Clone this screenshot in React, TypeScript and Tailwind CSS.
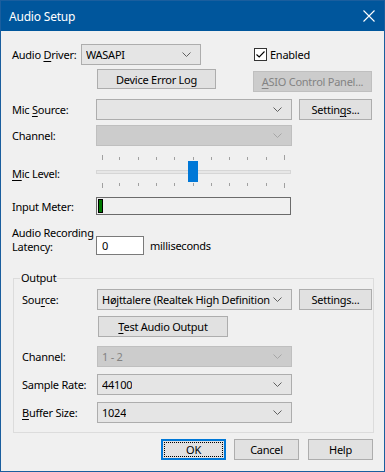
import React from 'react';

const font = { fontFamily: '"Noto Sans", "Liberation Sans", sans-serif' };

function Chevron({ disabled }: { disabled?: boolean }) {
  return (
    <svg width="9" height="5" viewBox="0 0 9 5" className="shrink-0">
      <path d="M0.5 0.5 L4.5 4.5 L8.5 0.5" fill="none" stroke={disabled ? '#a6a6a6' : '#606060'} strokeWidth="1" />
    </svg>
  );
}

function Combo({ value, width, disabled }: { value?: string; width: string; disabled?: boolean }) {
  return (
    <div
      className={`${width} h-[21px] shrink-0 flex items-center justify-between pl-[4px] pr-[9px] gap-[3px] border ${
        disabled ? 'bg-[#cccccc] border-[#bfbfbf] text-[#838383]' : 'bg-[#e5e5e5] border-[#adadad] text-black'
      }`}
    >
      <span className="overflow-hidden whitespace-nowrap">{value}</span>
      <Chevron disabled={disabled} />
    </div>
  );
}

function Button({ children, width, disabled, focused, className = '' }: { children: React.ReactNode; width: string; disabled?: boolean; focused?: boolean; className?: string }) {
  return (
    <div
      className={`${width} h-[21px] shrink-0 flex items-center justify-center whitespace-nowrap ${
        disabled
          ? 'bg-[#cccccc] border border-[#bfbfbf] text-[#838383]'
          : focused
          ? 'bg-[#e1e1e1] border-2 border-[#0078d7] text-black outline outline-1 outline-dotted outline-black outline-offset-[-4px]'
          : 'bg-[#e1e1e1] border border-[#adadad] text-black'
      } ${className}`}
    >
      {children}
    </div>
  );
}

function Acc({ children }: { children: React.ReactNode }) {
  return <span className="underline underline-offset-[2px] decoration-1">{children}</span>;
}

function Slider() {
  const ticks = [6, 23, 42, 60, 78, 97, 115, 133, 151, 170, 188];
  return (
    <svg width="196" height="34" viewBox="0 0 196 34">
      {ticks.map((x, i) => {
        const edge = i === 0 || i === ticks.length - 1;
        return (
          <g key={x} stroke="#a0a0a0" strokeWidth="1">
            <line x1={x + 0.5} y1={edge ? 0 : 2} x2={x + 0.5} y2={5} />
            <line x1={x + 0.5} y1={28} x2={x + 0.5} y2={edge ? 33 : 31} />
          </g>
        );
      })}
      <rect x="0.5" y="15.5" width="194" height="3" fill="#e7e7e7" stroke="#d6d6d6" />
      <rect x="92" y="6" width="10" height="21" fill="#0078d7" />
    </svg>
  );
}

export default function App() {
  return (
    <div style={font} className="w-[385px] h-[472px] flex flex-col bg-[#f0f0f0] border border-[#1a5e9e] text-[11px] tracking-[-0.25px] leading-[15px] text-black overflow-hidden">
      {/* title bar */}
      <div className="h-[30px] shrink-0 bg-[#00569c] flex items-center justify-between pl-[8px] pr-[9px] text-white">
        <span className="text-[12px] tracking-[-0.2px]">Audio Setup</span>
        <svg width="12" height="12" viewBox="0 0 12 12">
          <path d="M0.5 0.5 L11.5 11.5 M11.5 0.5 L0.5 11.5" stroke="white" strokeWidth="1.1" fill="none" />
        </svg>
      </div>

      <div className="flex flex-col pl-[11px] pr-[11px]">
        {/* Audio driver row */}
        <div className="mt-[13px] flex items-center h-[21px] whitespace-nowrap">
          <span className="w-[69px] shrink-0">Audio <Acc>D</Acc>river:</span>
          <Combo value="WASAPI" width="w-[120px]" />
          <div className="ml-[53px] flex items-center gap-[3px]">
            <div className="w-[13px] h-[13px] bg-white border border-[#333333] flex items-center justify-center">
              <svg width="9" height="7" viewBox="0 0 9 7">
                <path d="M0.5 3.5 L3.2 6 L8.5 0.5" fill="none" stroke="#000" strokeWidth="1.1" />
              </svg>
            </div>
            <span>Enabled</span>
          </div>
        </div>

        {/* Device error log / ASIO */}
        <div className="mt-[4px] flex items-start">
          <Button width="w-[119px]" className="ml-[85px] !h-[20px]">Device Error Log</Button>
          <Button width="w-[119px]" disabled className="ml-[37px] mt-[2px]"><span><Acc>A</Acc>SIO Control Panel...</span></Button>
        </div>

        {/* Mic source */}
        <div className="mt-[7px] flex items-center whitespace-nowrap">
          <span className="w-[84px] shrink-0">Mic <Acc>S</Acc>ource:</span>
          <Combo width="w-[196px]" />
          <Button width="w-[73px]" className="ml-[7px]"><span>Settin<Acc>g</Acc>s...</span></Button>
        </div>

        {/* Channel */}
        <div className="mt-[5px] flex items-center whitespace-nowrap">
          <span className="w-[84px] shrink-0">Channel:</span>
          <Combo width="w-[196px]" disabled />
        </div>

        {/* Mic level */}
        <div className="mt-[9px] flex items-center h-[34px] whitespace-nowrap">
          <span className="w-[84px] shrink-0 mt-[3px]"><Acc>M</Acc>ic Level:</span>
          <Slider />
        </div>

        {/* Input meter */}
        <div className="mt-[8px] flex items-center whitespace-nowrap">
          <span className="w-[84px] shrink-0">Input Meter:</span>
          <div className="w-[195px] h-[18px] border border-[#6b6b6b] flex items-center pl-[1px]">
            <div className="w-[5px] h-[14px] bg-[#007a00] border border-black" />
          </div>
        </div>

        {/* Latency */}
        <div className="mt-[11px] flex items-start whitespace-nowrap">
          <span className="w-[84px] shrink-0 leading-[14px]">Audio Recording<br />Latency:</span>
          <div className="mt-[10px] w-[48px] h-[19px] bg-white border border-[#7a7a7a] pl-[5px] flex items-center">0</div>
          <span className="ml-[6px] mt-[12px]">milliseconds</span>
        </div>

        {/* Output group */}
        <fieldset className="mt-[15px] ml-[1px] w-[361px] border border-[#dcdcdc] pl-[8px] pb-[9px] whitespace-nowrap">
          <legend className="-ml-[2px] px-[1px] leading-[16px]">Output</legend>
          <div className="mt-[3px] flex items-center">
            <span className="w-[75px] shrink-0">Sou<Acc>r</Acc>ce:</span>
            <Combo value="Højttalere (Realtek High Definition Audio)" width="w-[195px]" />
            <Button width="w-[73px]" className="ml-[7px]">Settings...</Button>
          </div>
          <Button width="w-[130px]" className="mt-[6px] ml-[76px]"><span><Acc>T</Acc>est Audio Output</span></Button>
          <div className="mt-[9px] flex items-center">
            <span className="w-[75px] shrink-0">Channel:</span>
            <Combo value="1 - 2" width="w-[195px]" disabled />
          </div>
          <div className="mt-[7px] flex items-center">
            <span className="w-[75px] shrink-0">Sample Rate:</span>
            <Combo value="44100" width="w-[195px]" />
          </div>
          <div className="mt-[7px] flex items-center">
            <span className="w-[75px] shrink-0"><Acc>B</Acc>uffer Size:</span>
            <Combo value="1024" width="w-[195px]" />
          </div>
        </fieldset>

        {/* dialog buttons */}
        <div className="mt-[6px] flex justify-end gap-[8px]">
          <Button width="w-[65px]" focused>OK</Button>
          <Button width="w-[65px]">Cancel</Button>
          <Button width="w-[65px]" className="ml-[1px]">Help</Button>
        </div>
      </div>
    </div>
  );
}
